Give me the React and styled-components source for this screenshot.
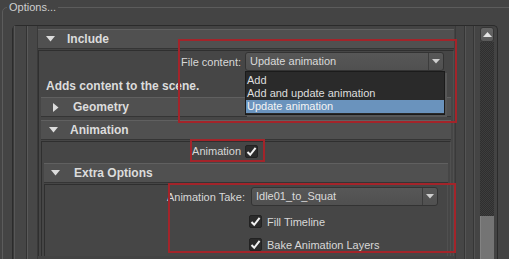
import React from 'react'
import styled, { createGlobalStyle } from 'styled-components'

const GlobalStyle = createGlobalStyle`
  html, body {
    margin: 0;
    padding: 0;
    background: #444444;
  }
  body {
    font-family: "Liberation Sans", Arial, sans-serif;
    font-size: 11px;
    color: #d6d6d6;
  }
`

function Arrow({ open }) {
  return open ? (
    <ArrowBox>
      <svg width="9" height="6" viewBox="0 0 9 6">
        <path d="M0 0 H9 L4.5 5.5 Z" fill="#dcdcdc" />
      </svg>
    </ArrowBox>
  ) : (
    <ArrowBox>
      <svg width="6" height="9" viewBox="0 0 6 9">
        <path d="M0 0 V9 L5.5 4.5 Z" fill="#dcdcdc" />
      </svg>
    </ArrowBox>
  )
}

function Check() {
  return (
    <CheckBox>
      <svg width="11" height="11" viewBox="0 0 11 11">
        <path d="M1.5 6 L4.2 8.8 L9.6 1.8" stroke="#f2f2f2" strokeWidth="2" fill="none" />
      </svg>
    </CheckBox>
  )
}

function Combo({ value, width, children }) {
  return (
    <ComboBox $width={width}>
      <ComboText>{value}</ComboText>
      <ComboButton>
        <svg width="8" height="5" viewBox="0 0 8 5">
          <path d="M0 0 H8 L4 4.5 Z" fill="#cfcfcf" />
        </svg>
      </ComboButton>
      {children}
    </ComboBox>
  )
}

function App() {
  return (
    <Page>
      <GlobalStyle />
      <GroupBox>
        <Legend>Options...</Legend>
        <ScrollFrame>
          <LeftGutter />
          <Column>
            <Header $indent={8}>
              <Arrow open />
              <HeaderText>Include</HeaderText>
            </Header>
            <Body>
              <FieldRow>
                <LabelCell $width={206}>File content:</LabelCell>
                <Combo value="Update animation" width={199}>
                  <DropList>
                    <DropItem>Add</DropItem>
                    <DropItem>Add and update animation</DropItem>
                    <DropItem $selected>Update animation</DropItem>
                  </DropList>
                </Combo>
              </FieldRow>
              <Description>Adds content to the scene.</Description>

              <Header $indent={10} $gap={13}>
                <Arrow />
                <HeaderText>Geometry</HeaderText>
              </Header>

              <Header $indent={8} $top={3}>
                <Arrow open />
                <HeaderText>Animation</HeaderText>
              </Header>
              <Body>
                <FieldRow $height={18} $top={0}>
                  <LabelCell $width={203}>Animation</LabelCell>
                  <Check />
                </FieldRow>

                <Header $indent={7} $gap={14} $top={3}>
                  <Arrow open />
                  <HeaderText>Extra Options</HeaderText>
                </Header>
                <Body>
                  <FieldRow $top={2}>
                    <LabelCell $width={206} $pad={6}>Animation Take:</LabelCell>
                    <Combo value="Idle01_to_Squat" width={187} />
                  </FieldRow>
                  <CheckList>
                    <CheckRow>
                      <Check />
                      <span>Fill Timeline</span>
                    </CheckRow>
                    <CheckRow>
                      <Check />
                      <span>Bake Animation Layers</span>
                    </CheckRow>
                  </CheckList>
                </Body>
              </Body>
            </Body>
          </Column>
          <RightGutter />
          <ScrollBar>
            <ScrollButton>
              <svg width="9" height="5" viewBox="0 0 9 5">
                <path d="M0 5 H9 L4.5 0 Z" fill="#e4e4e4" />
              </svg>
            </ScrollButton>
            <ScrollTrack />
            <ScrollThumb />
          </ScrollBar>
        </ScrollFrame>
      </GroupBox>

      <Highlight style={{ left: 178, top: 39, width: 279, height: 84 }} />
      <Highlight style={{ left: 190, top: 139, width: 75, height: 23 }} />
      <Highlight style={{ left: 168, top: 183, width: 288, height: 70 }} />
    </Page>
  )
}

export default App

const Page = styled.div`
  position: relative;
  width: 509px;
  height: 259px;
  overflow: hidden;
  background: #444444;
`

const GroupBox = styled.div`
  margin: 7px 0 0 2px;
  width: 540px;
  height: 300px;
  box-sizing: border-box;
  border: 1px solid #5c5c5c;
  border-radius: 5px;
  padding: 0 0 0 9px;
`

const Legend = styled.div`
  margin: -8px 0 0 -5px;
  padding: 0 2px;
  width: fit-content;
  line-height: 14px;
  font-size: 11px;
  color: #cfcfcf;
  background: #444444;
`

const ScrollFrame = styled.div`
  display: flex;
  margin-top: 11px;
  width: 486px;
  height: 260px;
  box-sizing: border-box;
  border: 1px solid #2b2b2b;
  border-bottom: none;
  border-radius: 5px 5px 0 0;
  background: #434343;
`

const LeftGutter = styled.div`
  width: 25px;
  flex: none;
  background:
    linear-gradient(90deg,
      #3a3a3a 0 1px, #575757 1px 2px, #464646 2px 13px,
      #333 13px 14px, #5a5a5a 14px 15px, #474747 15px 24px, #393939 24px 25px);
`

const Column = styled.div`
  width: 417px;
  flex: none;
  padding: 3px 1px 0 0;
  box-sizing: border-box;
`

const RightGutter = styled.div`
  width: 25px;
  flex: none;
  background:
    linear-gradient(90deg,
      #3a3a3a 0 1px, #464646 1px 9px, #363636 9px 10px, #555 10px 11px,
      #464646 11px 18px, #363636 18px 19px, #525252 19px 20px, #444 20px 25px);
`

const ScrollBar = styled.div`
  width: 14px;
  flex: none;
  margin-top: 1px;
  display: flex;
  flex-direction: column;
`

const ScrollButton = styled.div`
  height: 15px;
  flex: none;
  display: flex;
  align-items: center;
  justify-content: center;
  background: linear-gradient(#666, #5a5a5a);
  border: 1px solid #363636;
  border-radius: 3px;
  box-sizing: border-box;
`

const ScrollTrack = styled.div`
  height: 174px;
  flex: none;
  background: repeating-conic-gradient(#2f2f2f 0 25%, #3d3d3d 0 50%) 0 0 / 2px 2px;
`

const ScrollThumb = styled.div`
  flex: 1;
  background: #747474;
  border-left: 1px solid #828282;
`

const Header = styled.div`
  display: flex;
  align-items: center;
  height: 20px;
  margin-top: ${p => p.$top || 0}px;
  padding-left: ${p => p.$indent}px;
  box-sizing: border-box;
  border-top: 1px solid #606060;
  border-bottom: 1px solid #353535;
  background: #505050;
  font-size: 12px;
  font-weight: bold;
  color: #dcdcdc;
  gap: ${p => p.$gap || 12}px;
`

const ArrowBox = styled.div`
  width: 9px;
  display: flex;
  justify-content: center;
`

const HeaderText = styled.span``

const Body = styled.div`
  margin-top: 1px;
  padding: 0 2px 0 2px;
  border: 1px solid;
  border-color: #2f2f2f #505050 #4a4a4a #2f2f2f;
  border-bottom: none;
  background: #464646;
`

const FieldRow = styled.div`
  display: flex;
  align-items: center;
  height: ${p => p.$height || 19}px;
  margin-top: ${p => p.$top ?? 1}px;
  margin-left: -2px;
`

const LabelCell = styled.div`
  width: ${p => p.$width}px;
  flex: none;
  box-sizing: border-box;
  padding-right: ${p => p.$pad || 4}px;
  text-align: right;
  font-size: 11px;
  color: #d8d8d8;
`

const ComboBox = styled.div`
  position: relative;
  display: flex;
  width: ${p => p.$width}px;
  height: 19px;
  box-sizing: border-box;
  border: 1px solid #333;
  border-radius: 3px;
  background: linear-gradient(#575757, #505050);
`

const ComboText = styled.div`
  flex: 1;
  padding-left: 4px;
  line-height: 17px;
  font-size: 11px;
  color: #dadada;
`

const ComboButton = styled.div`
  width: 14px;
  border-left: 1px solid #3c3c3c;
  display: flex;
  align-items: center;
  justify-content: center;
`

const DropList = styled.div`
  position: absolute;
  left: -1px;
  top: 18px;
  width: 200px;
  padding: 2px 0 1px;
  box-sizing: border-box;
  background: #2a2a2a;
  border: 1px solid #1b1b1b;
  box-shadow: 2px 2px 0 #575757;
  z-index: 2;
`

const DropItem = styled.div`
  height: 13px;
  line-height: 13px;
  padding-left: 1px;
  font-size: 11px;
  color: ${p => (p.$selected ? '#f4f4f4' : '#dedede')};
  background: ${p => (p.$selected ? '#6a93bd' : 'transparent')};
`

const Description = styled.div`
  margin: 6px 0 2px 5px;
  line-height: 18px;
  font-size: 12px;
  font-weight: bold;
  color: #dcdcdc;
`

const CheckBox = styled.div`
  width: 13px;
  height: 13px;
  flex: none;
  box-sizing: border-box;
  display: flex;
  align-items: center;
  justify-content: center;
  background: #2b2b2b;
  border: 1px solid #222;
  border-radius: 2px;
`

const CheckList = styled.div`
  margin-top: 4px;
  padding-left: 202px;
`

const CheckRow = styled.div`
  display: flex;
  align-items: center;
  gap: 5px;
  height: 23px;
  font-size: 11px;
  color: #d8d8d8;
`

const Highlight = styled.div`
  position: absolute;
  box-sizing: border-box;
  border: 2px solid #a3242a;
  pointer-events: none;
`
